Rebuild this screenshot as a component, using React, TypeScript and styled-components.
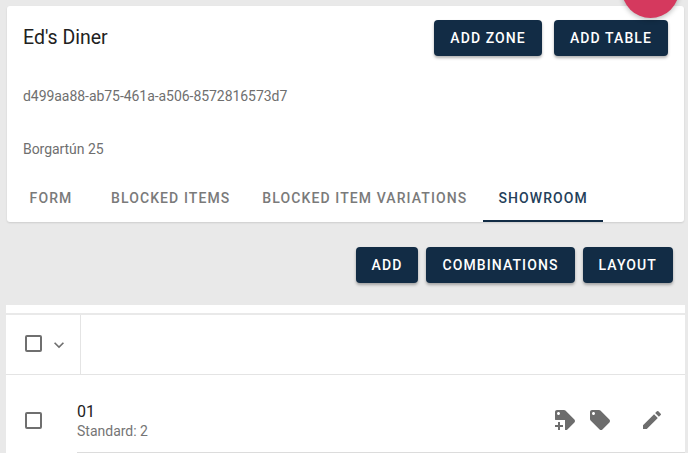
import styled, { createGlobalStyle } from "styled-components";
import { MdEdit, MdKeyboardArrowDown, MdLocalOffer } from "react-icons/md";

const GlobalStyle = createGlobalStyle`
  html, body {
    margin: 0;
    height: 100%;
    overflow: hidden;
    background: #e9e9e9;
    font-family: Roboto, "Liberation Sans", sans-serif;
  }
`;

const Page = styled.div`
  position: relative;
  width: 688px;
  height: 453px;
  overflow: hidden;
  padding-top: 6px;
  box-sizing: border-box;
`;

const Fab = styled.div`
  position: absolute;
  top: -39px;
  left: 622px;
  width: 57px;
  height: 57px;
  border-radius: 50%;
  background: #d5395e;
  box-shadow: 0 2px 5px rgba(0, 0, 0, 0.25);
  z-index: 2;
`;

const Card = styled.section`
  width: 677px;
  height: 216px;
  margin-left: 7px;
  background: #fff;
  border-radius: 3px;
  box-shadow: 0 1px 2px rgba(0, 0, 0, 0.12);
  display: flex;
  flex-direction: column;
`;

const CardHeader = styled.div`
  display: flex;
  align-items: center;
  justify-content: space-between;
  padding: 13px 16px 0;
`;

const Title = styled.h1`
  margin: 0;
  padding-top: 1px;
  font-size: 19.5px;
  line-height: 36px;
  font-weight: 400;
  color: #212121;
`;

const ButtonRow = styled.div`
  display: flex;
  gap: ${(props: { $gap: number }) => props.$gap}px;
`;

const Button = styled.button`
  height: 36px;
  padding: 0 16px;
  border: none;
  border-radius: 4px;
  background: #122c45;
  color: #fff;
  font-family: inherit;
  font-size: 14px;
  font-weight: 500;
  letter-spacing: 1.1px;
  box-shadow: 0 2px 3px rgba(0, 0, 0, 0.3);
`;

const Meta = styled.div`
  margin: ${(props: { $top: number }) => props.$top}px 0 0 16px;
  font-size: 14px;
  line-height: 16px;
  letter-spacing: -0.05px;
  color: #6f6f6f;
`;

const Tabs = styled.nav`
  display: flex;
  margin-top: auto;
  height: 48px;
`;

const Tab = styled.div<{ $active?: boolean }>`
  min-width: 88px;
  padding: 0 ${(props) => (props.$active ? 15 : 16)}px;
  text-align: center;
  line-height: 49px;
  font-size: 14px;
  font-weight: 500;
  letter-spacing: 1.1px;
  white-space: nowrap;
  box-sizing: border-box;
  color: ${(props) => (props.$active ? "#24405a" : "#7a7a7a")};
  border-bottom: 2px solid ${(props) => (props.$active ? "#122c45" : "transparent")};
`;

const Actions = styled(ButtonRow)`
  justify-content: flex-end;
  padding: 25px 15px 0 0;
  height: 58px;
`;

const Table = styled.section`
  width: 679px;
  margin: 0 0 0 6px;
  background: #fff;
  padding-top: 8px;
`;

const HeadRow = styled.div`
  display: flex;
  height: 59px;
  border-top: 2px solid #e9e9e9;
  border-bottom: 1px solid #e4e4e4;
`;

const SelectCell = styled.div`
  width: 75px;
  padding: 0 0 3px 19px;
  box-sizing: border-box;
  display: flex;
  align-items: center;
  border-right: 1px solid #e4e4e4;
  color: #6f6f6f;
  svg {
    margin: 3px 0 0 7px;
  }
`;

const Checkbox = styled.span`
  display: block;
  flex: none;
  width: 13px;
  height: 13px;
  border: 2px solid #6f6f6f;
  border-radius: 2px;
`;

const RowCheckbox = styled(Checkbox)`
  margin-top: 37px;
`;

const BodyRow = styled.div`
  display: flex;
  align-items: flex-start;
  height: 78px;
  padding-left: 19px;
`;

const RowMain = styled.div`
  flex: 1;
  margin-left: 35px;
  height: 100%;
  padding: 27px 21px 0 0;
  box-sizing: border-box;
  display: flex;
  align-items: flex-start;
  justify-content: space-between;
  border-bottom: 1px solid #dcdcdc;
`;

const RowName = styled.div`
  font-size: 16px;
  line-height: 20px;
  color: #212121;
`;

const RowDetail = styled.div`
  margin-top: 1px;
  font-size: 14px;
  line-height: 16px;
  color: #757575;
`;

const RowIcons = styled.div`
  display: flex;
  align-items: center;
  color: #6d6d6d;
  margin-top: 6px;
  height: 24px;
`;

const IconSlot = styled.span`
  display: flex;
  margin-left: ${(props: { $left?: number }) => props.$left ?? 0}px;
`;

const TagPlusIcon = () => (
  <svg width="24" height="24" viewBox="0 0 24 24" fill="currentColor">
    <path d="M21.41 11.58l-9-9C12.05 2.22 11.55 2 11 2H4c-1.1 0-2 .9-2 2v7c0 .55.22 1.05.59 1.42l9 9c.36.36.86.58 1.41.58.55 0 1.05-.22 1.41-.59l7-7c.37-.36.59-.86.59-1.41 0-.55-.23-1.06-.59-1.42zM5.5 7C4.67 7 4 6.33 4 5.5S4.67 4 5.5 4 7 4.67 7 5.5 6.33 7 5.5 7z" />
    <rect x="0" y="12" width="12" height="12" fill="#fff" />
    <path d="M5 14h2v3h3v2H7v3H5v-3H2v-2h3z" />
  </svg>
);

const App = () => (
  <>
    <GlobalStyle />
    <Page>
      <Fab />
      <Card>
        <CardHeader>
          <Title>Ed's Diner</Title>
          <ButtonRow $gap={12}>
            <Button>ADD ZONE</Button>
            <Button>ADD TABLE</Button>
          </ButtonRow>
        </CardHeader>
        <Meta $top={32}>d499aa88-ab75-461a-a506-8572816573d7</Meta>
        <Meta $top={37}>Borgartún 25</Meta>
        <Tabs>
          <Tab>FORM</Tab>
          <Tab>BLOCKED ITEMS</Tab>
          <Tab>BLOCKED ITEM VARIATIONS</Tab>
          <Tab $active>SHOWROOM</Tab>
        </Tabs>
      </Card>
      <Actions $gap={8}>
        <Button>ADD</Button>
        <Button>COMBINATIONS</Button>
        <Button>LAYOUT</Button>
      </Actions>
      <Table>
        <HeadRow>
          <SelectCell>
            <Checkbox />
            <MdKeyboardArrowDown size={20} />
          </SelectCell>
        </HeadRow>
        <BodyRow>
          <RowCheckbox />
          <RowMain>
            <div>
              <RowName>01</RowName>
              <RowDetail>Standard: 2</RowDetail>
            </div>
            <RowIcons>
              <IconSlot>
                <TagPlusIcon />
              </IconSlot>
              <IconSlot $left={11}>
                <MdLocalOffer size={24} />
              </IconSlot>
              <IconSlot $left={28}>
                <MdEdit size={24} />
              </IconSlot>
            </RowIcons>
          </RowMain>
        </BodyRow>
      </Table>
    </Page>
  </>
);

export default App;
